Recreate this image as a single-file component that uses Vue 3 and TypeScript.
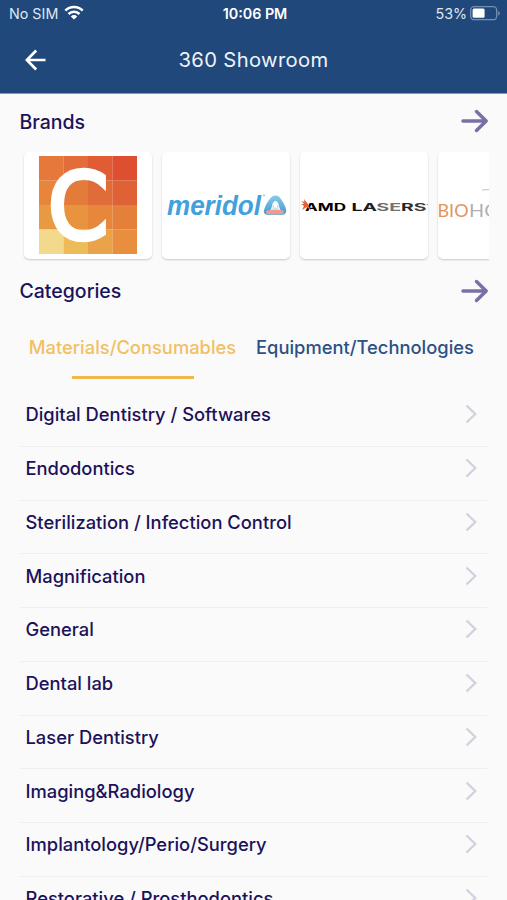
<script setup lang="ts">
import { ref } from 'vue'

const tabs: string[] = ['Materials/Consumables', 'Equipment/Technologies']
const activeTab = ref<number>(0)

const categories: string[] = [
  'Digital Dentistry / Softwares',
  'Endodontics',
  'Sterilization / Infection Control',
  'Magnification',
  'General',
  'Dental lab',
  'Laser Dentistry',
  'Imaging&Radiology',
  'Implantology/Perio/Surgery',
  'Restorative / Prosthodontics',
]

const tiles: string[] = [
  '#e5783a', '#e26d38', '#e05c34', '#dd4f30',
  '#e6853b', '#e57b3a', '#e06c39', '#df6237',
  '#e89a42', '#e8943f', '#e6873b', '#e4803a',
  '#f3d98b', '#edbb58', '#eaa348', '#e78f3e',
]
</script>

<template>
  <div class="screen">
    <header class="top">
      <div class="status">
        <div class="carrier">
          <span>No SIM</span>
          <svg width="20" height="15" viewBox="0 0 20 15" fill="none" stroke="#fff" stroke-width="2.5">
            <path d="M1.3 5.6a12.4 12.4 0 0 1 17.4 0" />
            <path d="M4.5 9a7.8 7.8 0 0 1 11 0" />
            <path d="M10 14.6l-3.2-3.2a4.5 4.5 0 0 1 6.4 0z" fill="#fff" stroke="none" />
          </svg>
        </div>
        <span class="time">10:06 PM</span>
        <div class="power">
          <span>53%</span>
          <svg width="31" height="15" viewBox="0 0 31 15">
            <rect x="0.7" y="0.7" width="26" height="13" rx="3.5" fill="none" stroke="#7390b3" stroke-width="1.3" />
            <rect x="2.6" y="2.6" width="12" height="9.2" rx="1.5" fill="#fff" />
            <path d="M28.2 5v4.6q1.6-.7 1.6-2.3T28.2 5z" fill="#7390b3" />
          </svg>
        </div>
      </div>
      <div class="bar">
        <svg class="back" width="22" height="22" viewBox="0 0 22 22" fill="none" stroke="#fff" stroke-width="2.7">
          <path d="M20.5 11H2M11.2 1.5L1.8 11l9.4 9.5" />
        </svg>
        <h1>360 Showroom</h1>
      </div>
    </header>

    <section class="heading">
      <h2>Brands</h2>
      <svg class="more" width="28" height="24" viewBox="0 0 28 24"><path d="M2 12h23M15.5 2.5L25.2 12l-9.7 9.5" /></svg>
    </section>

    <div class="brands">
      <div class="card">
        <svg width="98" height="98" viewBox="0 0 98 98" class="mosaic">
          <rect
            v-for="(fill, i) in tiles"
            :key="i"
            :x="(i % 4) * 24.5"
            :y="Math.floor(i / 4) * 24.5"
            width="24.6"
            height="24.6"
            :fill="fill"
          />
          <text x="9" y="82.7" textLength="60.5" lengthAdjust="spacingAndGlyphs" class="big-c">C</text>
        </svg>
      </div>
      <div class="card">
        <svg width="128" height="107" viewBox="0 0 128 107">
          <defs>
            <linearGradient id="peak" x1="0" y1="0" x2="0" y2="1">
              <stop offset="0" stop-color="#8ccbe9" />
              <stop offset="1" stop-color="#3b98d4" />
            </linearGradient>
          </defs>
          <text x="5" y="62.5" textLength="94" lengthAdjust="spacingAndGlyphs" class="meridol">meridol</text>
          <circle cx="102" cy="43.5" r="1" fill="#8dc7e8" />
          <path d="M110 44.5Q113.5 42.300 117 44.5Q122.5 51 124.200 58Q124.500 62.500 120 62.800H106Q101 62.500 102 58Q104.500 50 110 44.500z" fill="url(#peak)" />
          <path d="M113.500 49q2.500 0 3.500 5t4 5.500H106q3-.500 4-5.500t3.500-5z" fill="#fff" />
          <path d="M104.500 58.800q8.500-2.500 17 0l.5 3q-9 1.500-18 0z" fill="#ed9a91" />
          <path d="M110.500 53h1.500v2.500h3v-2.500h1.500v5h-6z" fill="#cbe3f0" />
        </svg>
      </div>
      <div class="card">
        <svg width="128" height="107" viewBox="0 0 128 107">
          <defs>
            <linearGradient id="steel" x1="0" x2="1">
              <stop offset="0" stop-color="#111" />
              <stop offset=".33" stop-color="#222" />
              <stop offset=".36" stop-color="#666" />
              <stop offset=".62" stop-color="#777" />
              <stop offset=".66" stop-color="#222" />
              <stop offset="1" stop-color="#444" />
            </linearGradient>
          </defs>
          <text x="5" y="58.6" textLength="41" lengthAdjust="spacingAndGlyphs" class="amd">AMD</text>
          <text x="51.5" y="58.6" textLength="75" lengthAdjust="spacingAndGlyphs" class="amd" fill="url(#steel)">LASERS</text>
          <path d="M1.500 49l3 1-.500-3 4 5 3 7-4-4-5 3 2-4-3-2 3 0z" fill="#e0603c" />
          <circle cx="127.300" cy="52.500" r=".6" fill="#777" />
        </svg>
      </div>
      <div class="card">
        <svg width="128" height="107" viewBox="0 0 128 107">
          <text x="-.5" y="64.5" textLength="31" lengthAdjust="spacingAndGlyphs" class="bio" fill="#e49458">BIO</text>
          <text x="31" y="64.5" textLength="31" lengthAdjust="spacingAndGlyphs" class="bio" fill="#aeb0b2">HO</text>
          <path d="M44 38q8-1 20-.5" stroke="#ccc4a8" fill="none" />
        </svg>
      </div>
    </div>

    <section class="heading categories-heading">
      <h2>Categories</h2>
      <svg class="more" width="28" height="24" viewBox="0 0 28 24"><path d="M2 12h23M15.5 2.5L25.2 12l-9.7 9.5" /></svg>
    </section>

    <nav class="tabs">
      <button
        v-for="(tab, i) in tabs"
        :key="tab"
        :class="['tab', { active: i === activeTab }]"
        @click="activeTab = i"
      >
        <span>{{ tab }}</span>
        <i class="underline"></i>
      </button>
    </nav>

    <ul class="list">
      <li v-for="name in categories" :key="name">
        <span>{{ name }}</span>
        <svg width="12" height="20" viewBox="0 0 12 20" fill="none" stroke="#d2d2df" stroke-width="2.4">
          <path d="M1.5 1.5L10.3 10l-8.8 8.5" />
        </svg>
      </li>
    </ul>
  </div>
</template>

<style>
body {
  background: #fafafb;
}
</style>

<style scoped>
.screen {
  width: 507px;
  height: 900px;
  overflow: hidden;
  box-sizing: border-box;
  background: #fafafb;
  color: #1c1259;
  font-family: Inter, "Liberation Sans", sans-serif;
}
.top {
  height: 93px;
  background: #21487b;
  color: #fff;
  border-bottom: 1px solid #8299b6;
}
.status {
  display: grid;
  grid-template-columns: 1fr auto 1fr;
  align-items: center;
  height: 27px;
  padding: 0 6px 0 9px;
  font-size: 14.3px;
}
.carrier,
.power {
  display: flex;
  align-items: center;
  gap: 6px;
  color: #dfe7f1;
}
.carrier svg {
  margin-top: -2px;
}
.power {
  justify-content: flex-end;
  gap: 3px;
}
.power svg {
  margin-top: -1px;
}
.time {
  font-weight: 600;
}
.bar {
  display: grid;
  grid-template-columns: 22px 1fr 22px;
  align-items: center;
  height: 65px;
  padding: 0 25px;
}
h1 {
  margin: -1px 0 0;
  font-size: 20.2px;
  font-weight: 400;
  letter-spacing: 0.35px;
  text-align: center;
  color: #eef3f8;
}
.heading {
  display: flex;
  align-items: center;
  justify-content: space-between;
  height: 54px;
  padding: 0 18.5px 0 19.5px;
}
h2 {
  margin: 1px 0 0;
  font-size: 19.5px;
  font-weight: 500;
}
.more {
  fill: none;
  stroke: #7b70a5;
  stroke-width: 3.5;
  stroke-linecap: round;
  stroke-linejoin: round;
}
.brands {
  display: flex;
  gap: 10px;
  height: 116px;
  box-sizing: border-box;
  margin: 0 18px 0 19px;
  padding: 4px 0 0 5px;
  overflow: hidden;
}
.card {
  display: flex;
  flex: 0 0 128px;
  align-items: center;
  justify-content: center;
  height: 107px;
  overflow: hidden;
  border-radius: 5px;
  background: #fff;
  box-shadow: 0 1px 2px rgba(0, 0, 0, 0.2);
}
.mosaic {
  margin-top: -1px;
}
.big-c {
  font: 400 92px "DejaVu Sans", sans-serif;
  fill: #fff;
  stroke: #fff;
  stroke-width: 4.5;
}
.meridol {
  font: italic bold 27px "Liberation Sans", sans-serif;
  fill: #42a0dc;
}
.amd {
  font: bold 10px Inter, sans-serif;
}
.bio {
  font: 400 17px Lato, sans-serif;
}
.categories-heading {
  height: 53.5px;
}
.tabs {
  display: flex;
  height: 75.5px;
  padding-left: 19px;
}
.tab {
  display: flex;
  flex-direction: column;
  align-items: center;
  justify-content: space-between;
  box-sizing: border-box;
  width: 227px;
  height: 61px;
  padding: 16px 0 0;
  border: 0;
  background: none;
  color: #2c5185;
  font: 500 18.35px/26px Inter, "Liberation Sans", sans-serif;
  white-space: nowrap;
}
.tab + .tab {
  width: 238px;
}
.tab.active {
  color: #f2c063;
}
.underline {
  width: 122px;
  height: 2.5px;
  background: transparent;
}
.active .underline {
  background: #f0b94f;
}
.list {
  margin: 0 20px;
  padding: 0;
  list-style: none;
}
.list li {
  display: flex;
  align-items: center;
  justify-content: space-between;
  box-sizing: border-box;
  height: 53.75px;
  padding: 0 10px 10px 5.5px;
  border-bottom: 1px solid #efeff1;
  font-size: 18.35px;
  font-weight: 500;
}
</style>
